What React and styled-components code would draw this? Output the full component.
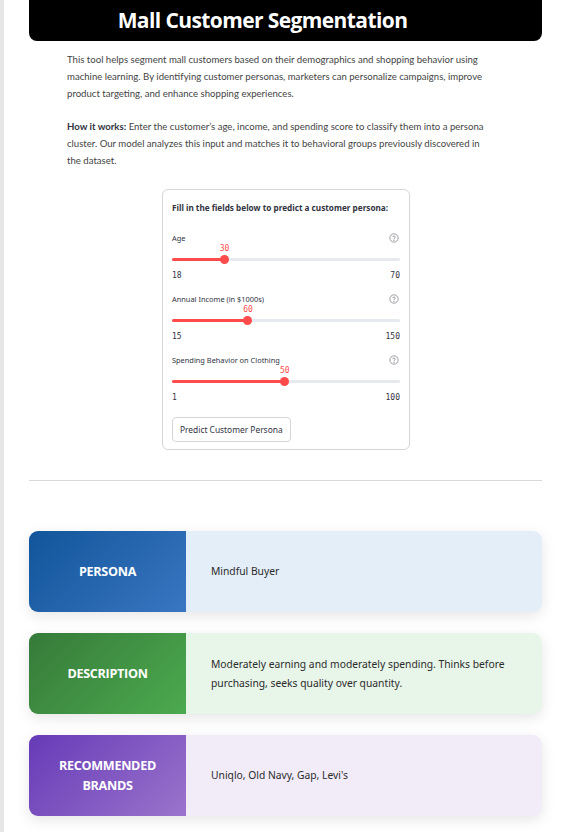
import React from "react";
import styled, { createGlobalStyle } from "styled-components";

const GlobalStyle = createGlobalStyle`
  html, body {
    margin: 0;
    padding: 0;
    background: #ffffff;
  }
  body {
    font-family: "Noto Sans", "Open Sans", sans-serif;
    color: #31333f;
  }
`;

const Page = styled.div`
  display: flex;
  min-height: 832px;
`;

const SideStrip = styled.div`
  width: 4px;
  flex-shrink: 0;
  background: #e6e6e6;
`;

const Main = styled.main`
  flex: 1;
  padding: 0 21px 20px 25px;
`;

const TitleBar = styled.h1`
  margin: 0;
  height: 41px;
  padding-right: 46px;
  background: #000;
  border-radius: 0 0 8px 8px;
  color: #fff;
  font-family: "Open Sans", sans-serif;
  font-weight: 700;
  font-size: 21px;
  line-height: 41px;
  text-align: center;
  letter-spacing: -0.6px;
`;

const Intro = styled.div`
  width: 421px;
  padding: 10px 0 0 38px;
  font-family: "Lato", sans-serif;
  font-size: 9.6px;
  line-height: 17px;
  color: #444;

  p {
    margin: 0 0 16px;
  }
  strong {
    color: #31333f;
  }
`;

const FormBox = styled.form`
  width: 248px;
  box-sizing: border-box;
  margin: 20px 0 0 133px;
  border: 1px solid #d6d6d9;
  border-radius: 6px;
  padding: 12px 9px 7px 9px;
`;

const FormHeading = styled.div`
  font-size: 8.2px;
  font-weight: 700;
  color: #31333f;
  margin-bottom: 19px;
`;

const SliderBlock = styled.div`
  margin-bottom: 13px;
`;

const LabelRow = styled.div`
  display: flex;
  justify-content: space-between;
  align-items: center;
  font-size: 7.4px;
  color: #31333f;
  height: 12px;
`;

const HelpIcon = styled.svg`
  width: 10px;
  height: 10px;
  margin-right: 1px;
`;

const TrackArea = styled.div`
  position: relative;
  height: 22px;
`;

const Track = styled.div`
  position: absolute;
  left: 0;
  right: 0;
  bottom: 5px;
  height: 3px;
  border-radius: 2px;
  background: #e6e9ef;
`;

const Fill = styled.div`
  position: absolute;
  left: 0;
  bottom: 5px;
  height: 3px;
  border-radius: 2px;
  background: #ff4b4b;
`;

const Thumb = styled.div`
  position: absolute;
  bottom: 2px;
  width: 9px;
  height: 9px;
  margin-left: -4.5px;
  border-radius: 50%;
  background: #ff4b4b;
`;

const ThumbValue = styled.div`
  position: absolute;
  top: 0;
  transform: translateX(-50%);
  font-family: "DejaVu Sans Mono", monospace;
  font-size: 8px;
  color: #ff4b4b;
`;

const MinMax = styled.div`
  display: flex;
  justify-content: space-between;
  font-family: "DejaVu Sans Mono", monospace;
  font-size: 8px;
  color: #31333f;
  margin-top: 5px;
`;

const PredictButton = styled.button`
  margin-top: 2px;
  font-family: "Noto Sans", sans-serif;
  font-size: 8.4px;
  color: #31333f;
  background: #fff;
  border: 1px solid #d6d6d9;
  border-radius: 4px;
  padding: 0 7px;
  height: 25px;
`;

const Divider = styled.hr`
  border: none;
  border-top: 1px solid #d9d9d9;
  margin: 30px 0 50px 0;
`;

const CardList = styled.div`
  display: flex;
  flex-direction: column;
  gap: 21px;
`;

const Card = styled.div`
  display: flex;
  min-height: 81px;
  border-radius: 9px;
  overflow: hidden;
  background: ${(p) => p.$light};
  box-shadow: 0 4px 14px rgba(0, 0, 0, 0.1);
`;

const CardLabel = styled.div`
  width: 157px;
  flex-shrink: 0;
  display: flex;
  align-items: center;
  justify-content: center;
  text-align: center;
  padding: 0 14px;
  box-sizing: border-box;
  background: linear-gradient(135deg, ${(p) => p.$from}, ${(p) => p.$to});
  color: #fff;
  font-family: "Open Sans", sans-serif;
  font-weight: 700;
  font-size: 12.6px;
  line-height: 20px;
  letter-spacing: -0.3px;
`;

const CardBody = styled.div`
  flex: 1;
  display: flex;
  align-items: center;
  padding: 0 22px 0 25px;
  font-size: 10.3px;
  line-height: 19px;
  color: #2b2b2b;
`;

const sliders = [
  { label: "Age", min: 18, max: 70, value: 30 },
  { label: "Annual Income (in $1000s)", min: 15, max: 150, value: 60 },
  { label: "Spending Behavior on Clothing", min: 1, max: 100, value: 50 },
];

const cards = [
  {
    label: "PERSONA",
    text: "Mindful Buyer",
    from: "#11559a",
    to: "#3a76c2",
    light: "#e4eef8",
  },
  {
    label: "DESCRIPTION",
    text: "Moderately earning and moderately spending. Thinks before purchasing, seeks quality over quantity.",
    from: "#367a39",
    to: "#4caa4f",
    light: "#e8f5e9",
  },
  {
    label: "RECOMMENDED BRANDS",
    text: "Uniqlo, Old Navy, Gap, Levi's",
    from: "#673ab7",
    to: "#9a74cc",
    light: "#f2ecf8",
  },
];

function Help() {
  return (
    <HelpIcon viewBox="0 0 24 24" fill="none" stroke="#8a8d96" strokeWidth="2">
      <circle cx="12" cy="12" r="10" />
      <path d="M9.1 9a3 3 0 0 1 5.8 1c0 2-3 2.5-3 4" strokeLinecap="round" />
      <circle cx="12" cy="17.5" r="0.6" fill="#8a8d96" />
    </HelpIcon>
  );
}

function Slider({ label, min, max, value }) {
  const pct = ((value - min) / (max - min)) * 100;
  return (
    <SliderBlock>
      <LabelRow>
        <span>{label}</span>
        <Help />
      </LabelRow>
      <TrackArea>
        <Track />
        <Fill style={{ width: `${pct}%` }} />
        <Thumb style={{ left: `${pct}%` }} />
        <ThumbValue style={{ left: `${pct}%` }}>{value}</ThumbValue>
      </TrackArea>
      <MinMax>
        <span>{min}</span>
        <span>{max}</span>
      </MinMax>
    </SliderBlock>
  );
}

export default function App() {
  return (
    <Page>
      <GlobalStyle />
      <SideStrip />
      <Main>
        <TitleBar>Mall Customer Segmentation</TitleBar>
        <Intro>
          <p>
            This tool helps segment mall customers based on their demographics
            and shopping behavior using machine learning. By identifying
            customer personas, marketers can personalize campaigns, improve
            product targeting, and enhance shopping experiences.
          </p>
          <p>
            <strong>How it works:</strong> Enter the customer’s age, income,
            and spending score to classify them into a persona cluster. Our
            model analyzes this input and matches it to behavioral groups
            previously discovered in the dataset.
          </p>
        </Intro>
        <FormBox onSubmit={(e) => e.preventDefault()}>
          <FormHeading>
            Fill in the fields below to predict a customer persona:
          </FormHeading>
          {sliders.map((s) => (
            <Slider key={s.label} {...s} />
          ))}
          <PredictButton type="submit">Predict Customer Persona</PredictButton>
        </FormBox>
        <Divider />
        <CardList>
          {cards.map((c) => (
            <Card key={c.label} $light={c.light}>
              <CardLabel $from={c.from} $to={c.to}>
                {c.label}
              </CardLabel>
              <CardBody>{c.text}</CardBody>
            </Card>
          ))}
        </CardList>
      </Main>
    </Page>
  );
}
